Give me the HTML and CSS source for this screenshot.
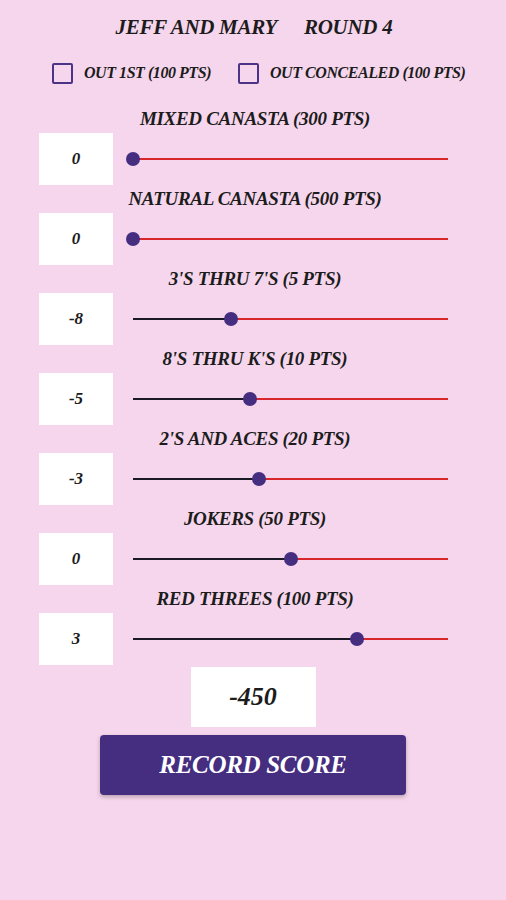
FILE: index.html
```html
<!DOCTYPE html>
<html>
<head>
<meta charset="utf-8">
<link rel="stylesheet" href="styles.css">
</head>
<body>
<div class="page">
  <h1 class="title"><span>JEFF AND MARY</span><span>ROUND 4</span></h1>
  <div class="checks">
    <label class="check"><span class="box"></span><span>OUT 1ST (100 PTS)</span></label>
    <label class="check"><span class="box"></span><span>OUT CONCEALED (100 PTS)</span></label>
  </div>
  <div class="items">
    <div class="item">
      <div class="label">MIXED CANASTA (300 PTS)</div>
      <div class="row"><div class="val">0</div><div class="slider"><div class="fill" style="width:0px"></div><div class="thumb" style="left:0px"></div></div></div>
    </div>
    <div class="item">
      <div class="label">NATURAL CANASTA (500 PTS)</div>
      <div class="row"><div class="val">0</div><div class="slider"><div class="fill" style="width:0px"></div><div class="thumb" style="left:0px"></div></div></div>
    </div>
    <div class="item">
      <div class="label">3'S THRU 7'S (5 PTS)</div>
      <div class="row"><div class="val">-8</div><div class="slider"><div class="fill" style="width:98px"></div><div class="thumb" style="left:98px"></div></div></div>
    </div>
    <div class="item">
      <div class="label">8'S THRU K'S (10 PTS)</div>
      <div class="row"><div class="val">-5</div><div class="slider"><div class="fill" style="width:117px"></div><div class="thumb" style="left:117px"></div></div></div>
    </div>
    <div class="item">
      <div class="label">2'S AND ACES (20 PTS)</div>
      <div class="row"><div class="val">-3</div><div class="slider"><div class="fill" style="width:126px"></div><div class="thumb" style="left:126px"></div></div></div>
    </div>
    <div class="item">
      <div class="label">JOKERS (50 PTS)</div>
      <div class="row"><div class="val">0</div><div class="slider"><div class="fill" style="width:158px"></div><div class="thumb" style="left:158px"></div></div></div>
    </div>
    <div class="item">
      <div class="label">RED THREES (100 PTS)</div>
      <div class="row"><div class="val">3</div><div class="slider"><div class="fill" style="width:224px"></div><div class="thumb" style="left:224px"></div></div></div>
    </div>
  </div>
  <div class="total">-450</div>
  <button class="record">RECORD SCORE</button>
</div>
</body>
</html>
```
FILE: styles.css
```css
html, body {
  margin: 0;
  padding: 0;
  background: #f6d6ec;
}
body {
  font-family: "Liberation Serif", "DejaVu Serif", serif;
  font-style: italic;
  font-weight: bold;
  color: #1c1c1c;
  width: 506px;
  height: 900px;
  overflow: hidden;
}
.page {
  display: flex;
  flex-direction: column;
  align-items: center;
  padding-top: 14px;
}
.title {
  margin: 0;
  font-size: 21px;
  font-weight: bold;
  line-height: 26px;
  display: flex;
  gap: 27px;
  letter-spacing: -0.3px;
  margin-left: 2px;
}
.checks {
  display: flex;
  gap: 27px;
  margin-top: 21px;
  height: 24px;
  align-items: center;
  align-self: flex-start;
  margin-left: 52px;
}
.check {
  display: flex;
  align-items: center;
  gap: 11px;
  font-size: 16px;
  letter-spacing: -0.45px;
}
.box {
  width: 17px;
  height: 17px;
  border: 2px solid #4d3388;
  border-radius: 2px;
}
.items {
  display: flex;
  flex-direction: column;
  align-self: stretch;
  margin-top: 22px;
}
.item {
  display: flex;
  flex-direction: column;
  height: 80px;
}
.label {
  text-align: center;
  font-size: 19px;
  line-height: 24px;
  height: 24px;
  letter-spacing: -0.3px;
  padding-left: 4px;
}
.row {
  display: flex;
  align-items: center;
  margin-left: 39px;
  margin-top: 2px;
  gap: 20px;
}
.val {
  width: 74px;
  height: 52px;
  background: #fff;
  display: flex;
  align-items: center;
  justify-content: center;
  font-size: 17px;
}
.slider {
  position: relative;
  width: 315px;
  height: 2px;
  background: #d8262c;
}
.fill {
  height: 2px;
  background: #1a1a24;
}
.thumb {
  position: absolute;
  top: -6px;
  width: 14px;
  height: 14px;
  margin-left: -7px;
  border-radius: 50%;
  background: #452d80;
}
.total {
  width: 125px;
  height: 60px;
  background: #fff;
  margin-top: 0px;
  display: flex;
  align-items: center;
  justify-content: center;
  font-size: 26px;
}
.record {
  margin-top: 8px;
  width: 306px;
  height: 60px;
  border: none;
  border-radius: 4px;
  background: #452d7f;
  color: #fff;
  font-family: "Liberation Serif", "DejaVu Serif", serif;
  font-style: italic;
  font-weight: bold;
  font-size: 25px;
  letter-spacing: -0.3px;
  box-shadow: 0 2px 4px rgba(0,0,0,0.25);
}
```
